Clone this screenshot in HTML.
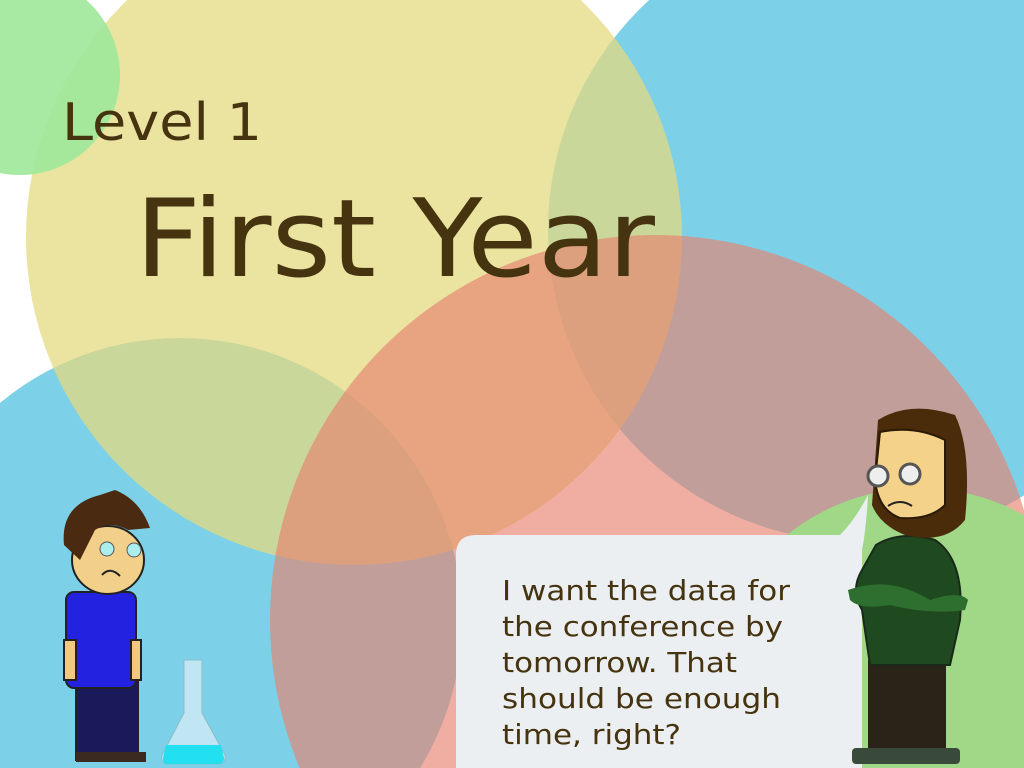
<!DOCTYPE html>
<html><head><style>
html,body{margin:0;padding:0;width:1024px;height:768px;overflow:hidden;background:#fff}
svg{display:block}
text{font-family:"DejaVu Sans","Liberation Sans",sans-serif;fill:#46330f}
</style></head><body>
<svg width="1024" height="768" viewBox="0 0 1024 768">
<rect width="1024" height="768" fill="#fff"/>
<circle cx="860" cy="230" r="312" fill="#7cd0e7"/>
<circle cx="180" cy="620" r="282" fill="#7cd0e7"/>
<circle cx="354" cy="237" r="328" fill="rgb(228,218,128)" fill-opacity="0.75"/>
<circle cx="20" cy="75" r="100" fill="#9ee89a" fill-opacity="0.9"/>
<circle cx="655" cy="620" r="385" fill="rgb(230,130,110)" fill-opacity="0.65"/>
<circle cx="920" cy="700" r="212" fill="#a0d888"/>
<text x="62" y="140" font-size="52" textLength="200" lengthAdjust="spacingAndGlyphs">Level 1</text>
<text x="135" y="276" font-size="108" textLength="520" lengthAdjust="spacingAndGlyphs">First Year</text>
<path d="M476 535 H840 Q855 520 868 495 Q866 530 862 550 V768 H456 V555 Q456 535 476 535 Z" fill="#ebeff2"/>
<text font-size="28">
<tspan x="502" y="600" textLength="288" lengthAdjust="spacingAndGlyphs">I want the data for</tspan>
</text>
<text x="502" y="636" font-size="28" textLength="281" lengthAdjust="spacingAndGlyphs">the conference by</text>
<text x="502" y="672" font-size="28" textLength="235" lengthAdjust="spacingAndGlyphs">tomorrow. That</text>
<text x="502" y="708" font-size="28" textLength="279" lengthAdjust="spacingAndGlyphs">should be enough</text>
<text x="502" y="744" font-size="28" textLength="179" lengthAdjust="spacingAndGlyphs">time, right?</text>
<!-- student -->
<g stroke="#222" stroke-width="2">
<rect x="76" y="680" width="62" height="80" fill="#1a1a5a"/>
<rect x="66" y="592" width="70" height="96" rx="8" fill="#2222e0"/>
<rect x="64" y="640" width="12" height="40" fill="#f0c880"/>
<rect x="131" y="640" width="10" height="40" fill="#f0c880"/>
<ellipse cx="108" cy="560" rx="36" ry="34" fill="#f2d08a"/>
</g>
<path d="M64 545 Q60 505 100 495 L115 490 Q140 500 150 528 L128 530 Q110 520 95 530 L80 560 Z" fill="#4a2a10"/>
<circle cx="107" cy="549" r="7" fill="#aee" stroke="#555"/><circle cx="134" cy="550" r="7" fill="#aee" stroke="#555"/>
<path d="M102 575 Q110 566 120 576" stroke="#222" stroke-width="2" fill="none"/>
<rect x="76" y="752" width="70" height="10" fill="#3a2a20"/>
<!-- flask -->
<path d="M184 660 H202 V713 L225 755 Q226 764 218 764 H168 Q160 764 162 755 L184 713 Z" fill="#bfe6f2" stroke="#8cbccc"/>
<path d="M166 745 H221 L224 758 Q224 764 218 764 H168 Q162 764 163 758 Z" fill="#22e0f0"/>
<!-- professor -->
<rect x="868" y="660" width="78" height="100" fill="#2a2418"/>
<path d="M876 545 Q900 530 935 540 Q965 560 960 620 L950 665 H870 L862 610 Q850 590 862 570 Z" fill="#1f4a1f" stroke="#1a2a1a" stroke-width="2"/>
<path d="M848 590 Q890 575 930 600 Q960 590 968 600 L965 610 Q930 615 890 605 Q860 610 850 600 Z" fill="#2e6e2e"/>
<path d="M878 420 Q910 400 955 415 Q972 450 965 520 Q945 545 905 535 Q880 525 872 505 Z" fill="#4a2c0a"/>
<path d="M880 432 Q915 425 945 440 L945 505 Q930 520 900 518 Q878 510 875 480 Z" fill="#f4d28a" stroke="#2a1a05" stroke-width="2"/>
<circle cx="878" cy="476" r="10" fill="#eee" stroke="#555" stroke-width="3"/><circle cx="910" cy="474" r="10" fill="#eee" stroke="#555" stroke-width="3"/>
<path d="M888 506 Q900 498 912 506" stroke="#222" stroke-width="2" fill="none"/>
<rect x="852" y="748" width="108" height="16" rx="4" fill="#3a4a3a"/>
</svg>
</body></html>
